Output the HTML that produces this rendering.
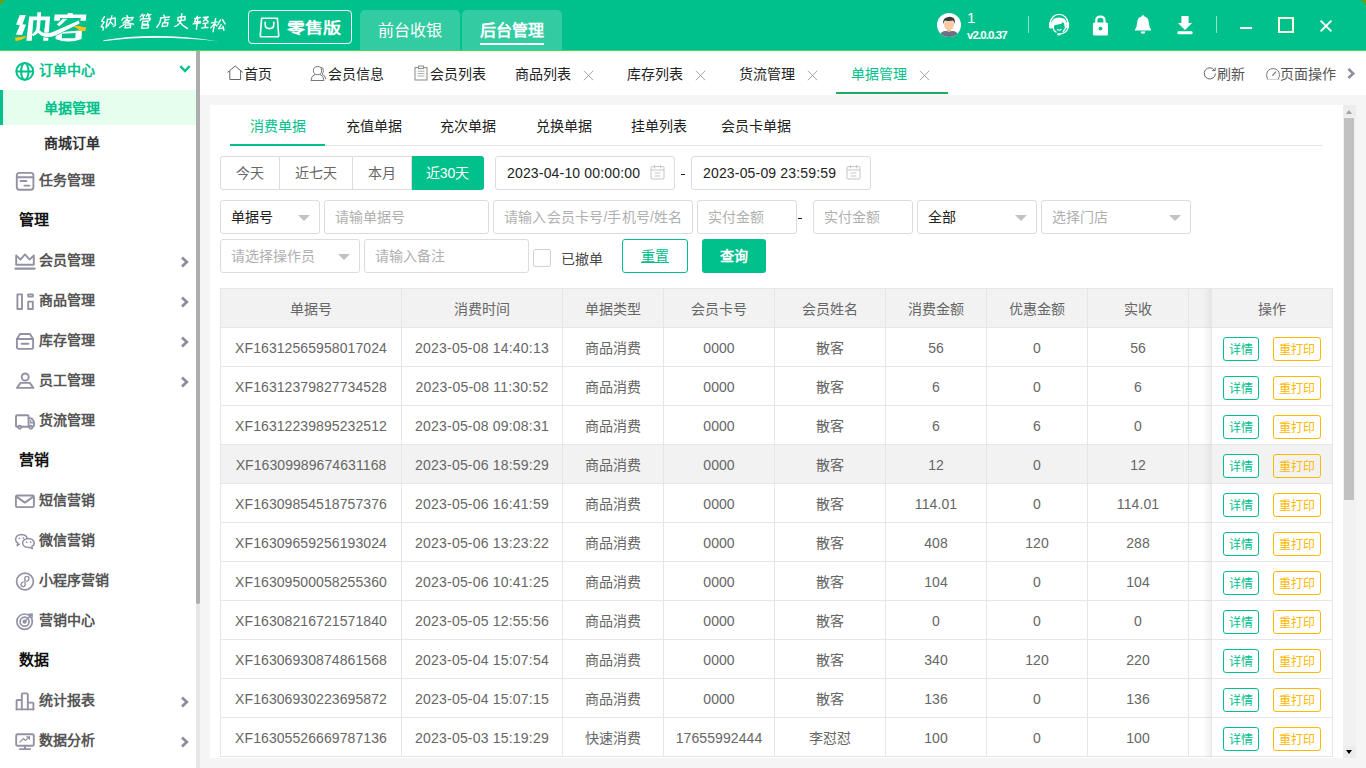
<!DOCTYPE html>
<html lang="zh-CN">
<head>
<meta charset="utf-8">
<title>纳客</title>
<style>
*{box-sizing:border-box;margin:0;padding:0}
html,body{width:1366px;height:768px;overflow:hidden}
body{position:relative;background:#f5f5f5;font-family:"Liberation Sans",sans-serif;font-size:14px;color:#666;line-height:1}
.abs{position:absolute}
svg{position:absolute;overflow:visible}
/* header */
#cn{position:absolute;left:0;top:0;width:1366px;height:6px;background:#7a9800}
#hd{position:absolute;left:0;top:0;width:1366px;height:51px;background:#00c08b;border-bottom:1px solid #46d468;border-radius:7px 7px 0 0}
.edition{position:absolute;left:248px;top:10px;width:104px;height:34px;border:1px solid #fff;border-radius:4px}
.edition span{position:absolute;left:38px;top:0;line-height:34px;font-size:15px;font-weight:bold;color:#fff;transform:scaleX(1.2);transform-origin:0 50%;white-space:nowrap}
.htab{position:absolute;top:10px;height:40px;width:100px;background:rgba(255,255,255,.2);border-radius:5px 5px 0 0;color:#fff;font-size:16px;line-height:42px;text-align:center}
.htab.on{font-weight:bold}
.htab.on i{position:absolute;left:18px;top:33px;width:64px;height:2px;background:#fff}
.uname{position:absolute;left:967px;top:9px;color:#fff;font-size:15px;line-height:17px}
.uver{position:absolute;left:967px;top:29px;color:#fff;font-size:11.5px;font-weight:bold;letter-spacing:-.9px;line-height:12px;white-space:nowrap}
.vdiv{position:absolute;top:16px;width:1px;height:17px;background:rgba(255,255,255,.55)}
/* sidebar */
#sb{position:absolute;left:0;top:51px;width:196px;height:717px;background:#fff}
#sbs{position:absolute;left:196px;top:51px;width:4px;height:717px;background:#e6e6e6}
#sbs i{position:absolute;left:0;top:0;width:4px;height:553px;background:#adadad;border-radius:0 0 2px 2px}
.mi{position:absolute;left:0;width:196px;height:40px;line-height:40px;font-weight:bold;color:#555;white-space:nowrap}
.mi span{position:absolute;left:39px;top:0}
.mi.sub span{left:44px}
.mi.sub{height:35px;line-height:37px;color:#333}
.mi.ttl span{left:19px;font-size:15px;color:#111}
.mi.g{color:#00c08b}
.mi.act{background:#e6feee;color:#00c08b;border-left:3px solid #00c08b}
.mi.act span{left:41px}
.mi svg{left:15px;top:11px;width:20px;height:20px;fill:none;stroke:#9292a4;stroke-width:1.9;stroke-linecap:round;stroke-linejoin:round}
.mi svg.chev{left:180px;top:15.5px;width:10px;height:12px;stroke:#8c8c9f;stroke-width:2.7;stroke-linecap:butt;stroke-linejoin:miter}
/* tab bar */
#tb{position:absolute;left:200px;top:51px;width:1166px;height:44px;background:#fff}
.pt{position:absolute;top:1px;height:44px;line-height:44px;color:#222;white-space:nowrap}
.pt.on{color:#00c08b}
.pt svg{fill:none;stroke:#777;stroke-width:1}
.px{position:absolute;top:19px;width:11px;height:11px}
.px svg{left:0;top:0;width:11px;height:11px;stroke:#aaa;stroke-width:1;fill:none}
/* panel */
#pn{position:absolute;left:210px;top:105px;width:1133px;height:653px;background:#fff}
.st{position:absolute;top:14px;height:26px;line-height:14px;padding-top:0;color:#222;white-space:nowrap}
.st.on{color:#00c08b}
.inp{position:absolute;height:34px;border:1px solid #dcdcdc;border-radius:3px;background:#fff;line-height:32px;white-space:nowrap;color:#222}
.inp span{position:absolute;left:10px;top:0}
.inp .ph{color:#b0b0b0}
.inp .tri{position:absolute;right:9px;top:14px;width:0;height:0;border:6px solid transparent;border-top-color:#c2c2c2;border-bottom-width:0}
.bg{position:absolute;top:51px;height:34px;border:1px solid #dcdcdc;border-left:none;line-height:32px;text-align:center;color:#666;background:#fff}
.btn{position:absolute;height:34px;line-height:32px;text-align:center;border-radius:3px}
/* table */
.th,.td{position:absolute;text-align:center;white-space:nowrap;overflow:hidden;border-right:1px solid #e6e6e6;border-bottom:1px solid #e6e6e6;color:#666}
.th{background:#f2f2f2;height:39px;line-height:40px}
.td{height:39px;line-height:40px;letter-spacing:.08px}
.tr{position:absolute;left:0;width:1133px;height:39px}
.tr.hov .td{background:#f2f2f2}
.ob{position:absolute;top:9px;height:24px;line-height:24px;font-size:12px;text-align:center;border-radius:3px;background:#fff}
.ob.d{left:11px;width:36px;border:1px solid #00c08b;color:#00c08b}
.ob.p{left:61px;width:48px;border:1px solid #ffb800;color:#ffb800;background:transparent}
</style>
</head>
<body>
<div id="cn"></div>
<div id="hd">
<svg style="left:10px;top:8px;width:90px;height:40px" viewBox="0 0 1366 607" fill="#fff">
<path d="M148,106L240,106L190,248L244,256L182,410L90,402L150,262L92,250Z"/>
<path d="M76,448Q165,444 236,425L238,448Q170,494 84,501Z" fill="#ffc20e"/>
<path d="M292,128H608L580,497H502L540,186H354L330,497H248Z"/>
<path d="M700,372L1092,338L1086,470Q890,548 690,470ZM790,392L786,458H990L996,378Z" fill-rule="evenodd"/>
<path d="M878,76H954L948,112H872Z"/>
<path d="M680,100H1158L1150,194H1068L1074,152H762L752,194H668Z"/>
<path d="M800,162H872L748,278L710,250Z"/>
<path d="M440,330Q520,412 640,368L1044,190L1056,236L700,414Q530,486 420,372Z" stroke="#00c08b" stroke-width="16" paint-order="stroke"/>
<path d="M416,64H472L456,300Q445,388 350,430L332,402Q392,362 402,300Z"/>
<path d="M965,276Q1040,256 1092,286Q1126,298 1158,288L1142,350Q1080,356 1036,322Q1000,292 968,294Z" fill="#ffc20e"/>
</svg>
<svg style="left:96px;top:8px;width:136px;height:40px" viewBox="0 0 1366 402" fill="none" stroke="#fff" stroke-width="14" stroke-linecap="round" stroke-linejoin="round">
<g transform="translate(19 0) skewX(-7)">
<path d="M75,88L55,132L80,142L55,186L80,196L78,222"/>
<path d="M110,112L106,200M110,116L186,100L195,176L178,186M150,78L140,142L120,182M146,142L170,166"/>
<path d="M300,76L310,90M256,122L266,102L366,96L354,120M310,110L272,150M292,126L340,126L242,196M300,146L378,162M300,172L296,200L350,196L350,170Z"/>
<path d="M456,62L436,90M450,76L480,70M466,80L470,100M510,56L496,86M506,70L540,66M520,78L526,96M440,126L446,110L540,106L534,126M466,132L466,204M466,136L520,130L520,160L470,162M470,172L530,168L528,200L468,204"/>
<path d="M670,72L680,86M640,100L730,90M646,100L640,150L616,194M690,106L688,140M690,122L726,116M670,150L668,186L720,180L722,148Z"/>
<path d="M816,96L820,130L890,120L886,86ZM850,56L850,130Q840,170 796,186M840,140Q870,180 924,206"/>
<path d="M986,106L1040,96M1010,82L986,140L1046,136M976,160L1050,150M1016,110L1016,214M1070,96L1120,90L1076,130M1086,106L1124,136M1076,156L1124,150M1100,156L1100,196M1066,200L1130,196"/>
<path d="M1160,150L1214,140M1196,106L1186,238M1190,156L1160,200M1196,160L1216,180M1246,120L1226,166M1266,116L1298,160M1260,166L1236,210L1286,200M1280,186L1294,224"/>
</g>
<path d="M72,324Q600,232 1236,336Q600,262 76,333Z" fill="#fff" stroke="none"/>
</svg>
<div class="edition"><svg style="left:10px;top:6px;width:21px;height:21px" viewBox="0 0 21 21" fill="none" stroke="#fff" stroke-width="1.6" stroke-linejoin="round" stroke-linecap="round"><path d="M2.6,1.2H18.4L19.7,18.6Q19.8,19.8 18.6,19.8H2.4Q1.2,19.8 1.3,18.6Z"/><path d="M6.2,5.2V7.5Q6.2,11.6 10.5,11.6Q14.8,11.6 14.8,7.5V5.2"/></svg><span>零售版</span></div>
<div class="htab" style="left:360px">前台收银</div>
<div class="htab on" style="left:462px">后台管理<i></i></div>
<svg style="left:937px;top:13px;width:24px;height:24px" viewBox="0 0 24 24"><defs><clipPath id="avc"><circle cx="12" cy="12" r="12"/></clipPath></defs><circle cx="12" cy="12" r="12" fill="#fff"/><g clip-path="url(#avc)"><path d="M2.5,24Q3,18.6 8,18L16,18Q21,18.6 21.5,24Z" fill="#6f6f86"/><path d="M10,15.5H14V18.2Q12,19.6 10,18.2Z" fill="#eeb58f"/><ellipse cx="12" cy="11.6" rx="5" ry="5.6" fill="#f8cba6"/><path d="M6.3,11.2Q5.2,5.2 10.5,4.2Q13,3.2 15.6,4.6Q18.6,5.6 17.7,11.2Q17.3,8.6 15.8,7.6Q12,8.6 8,7.4Q6.6,8.6 6.3,11.2Z" fill="#3b3b3b"/></g></svg>
<div class="uname">1</div><div class="uver">v2.0.0.37</div>
<div class="vdiv" style="left:1028px"></div><div class="vdiv" style="left:1216px"></div>
<svg style="left:1048px;top:13px;width:23px;height:24px" viewBox="0 0 23 24" fill="none" stroke="#fff" stroke-linecap="round"><path d="M2.3,10.6A8.8,9.2 0 0 1 19.9,10.6" stroke-width="1.4"/><rect x="1.1" y="9" width="2.9" height="6.4" rx="1.2" fill="#fff" stroke="none"/><rect x="18.2" y="9" width="2.9" height="6.4" rx="1.2" fill="#fff" stroke="none"/><path d="M3.8,9.4Q4.4,4.9 11,4.6Q17.8,4.9 18.4,9.4L18.3,13.9L16.5,13.7Q16.7,10.6 14.8,8.8Q14.4,10.2 13.2,10.8Q10,11.7 6.6,12.2Q5.6,13 5.9,15L4,15.3Z" fill="#fff" stroke="none"/><path d="M5,14.6Q5.4,17.7 8.1,19.1M17.6,14.2Q17.2,16.7 15.2,18.3" stroke-width="1.2"/><path d="M9.4,16.5Q11.2,17.7 13.1,16.5" stroke-width="1.1"/><path d="M19.8,15.2Q19.2,19.6 12.6,21" stroke-width="1.2"/><ellipse cx="10.9" cy="21.2" rx="1.7" ry="1.25" fill="#fff" stroke="none"/></svg>
<svg style="left:1092px;top:14px;width:17px;height:22px" viewBox="0 0 17 22"><path d="M4.3,9V6.4Q4.3,2.6 8.4,2.6Q12.5,2.6 12.5,6.4V9" fill="none" stroke="#fff" stroke-width="2.2"/><rect x="0.9" y="8.4" width="15.1" height="13.1" rx="1.6" fill="#fff"/><circle cx="8.4" cy="14.6" r="1.9" fill="#00c08b"/></svg>
<svg style="left:1134px;top:14px;width:18px;height:21px" viewBox="0 0 18 21" fill="#fff"><path d="M9,1.2Q10.3,1.2 10.4,2.6Q14.6,3.8 14.8,8.6Q15,13.2 17,15.4V16.6H1V15.4Q3,13.2 3.2,8.6Q3.4,3.8 7.6,2.6Q7.7,1.2 9,1.2Z"/><path d="M6.6,17.6H11.4Q11.2,19.8 9,19.8Q6.8,19.8 6.6,17.6Z"/></svg>
<svg style="left:1177px;top:15px;width:16px;height:20px" viewBox="0 0 16 20" fill="#fff"><path d="M4.4,1H11.6V8H15L8,15L1,8H4.4Z"/><rect x="0.5" y="16.2" width="15" height="3" rx="1"/></svg>
<div class="abs" style="left:1240px;top:27px;width:12px;height:2px;background:#fff"></div>
<div class="abs" style="left:1278px;top:17px;width:16px;height:16px;border:2px solid #ffffe0"></div>
<svg style="left:1320px;top:20px;width:12px;height:12px" viewBox="0 0 12 12" stroke="#fff" stroke-width="1.9"><path d="M.6,.6L11.4,11.4M11.4,.6L.6,11.4"/></svg>
</div>
<div id="sb">
<div class="mi g" style="top:0px;height:39px;line-height:39px"><svg viewBox="0 0 20 20" style="stroke:#00c08b;stroke-width:2"><circle cx="9.8" cy="9.4" r="8.4"/><ellipse cx="9.8" cy="9.4" rx="3.7" ry="8.4"/><path d="M1.6,9.4H18"/></svg><span>订单中心</span><svg class="chev" viewBox="0 0 12 10" style="left:179px;top:13px;width:12px;height:10px;stroke:#00c08b;stroke-width:2.4;stroke-linecap:butt;stroke-linejoin:miter"><path d="M1.4,2.2L6,7L10.6,2.2"/></svg></div>
<div class="mi sub act" style="top:39px"><span>单据管理</span></div>
<div class="mi sub" style="top:74px"><span>商城订单</span></div>
<div class="mi " style="top:109px"><svg viewBox="0 0 20 20"><rect x="1.8" y="1.9" width="16.6" height="16.8" rx="2.4"/><path d="M1.8,6.2H18.4M5.6,10H11.4M9.4,14.6H14.4" /></svg><span>任务管理</span></div>
<div class="mi ttl" style="top:149px"><span>管理</span></div>
<div class="mi " style="top:189px"><svg viewBox="0 0 20 20"><path d="M1.2,4.4L5.4,8.6L10,3.4L14.6,8.6L18.8,4.4V13.8H1.2Z"/><path d="M.4,17.6H19.6" stroke-width="2.1"/></svg><span>会员管理</span><svg class="chev" viewBox="0 0 10 12"><path d="M2,1.5L6.8,6L2,10.5"/></svg></div>
<div class="mi " style="top:229px"><svg viewBox="0 0 20 20"><rect x="2.4" y="3.4" width="4.6" height="14.6"/><rect x="13.2" y="3.4" width="4.6" height="2.2"/><rect x="13.2" y="10.6" width="4.6" height="7.4"/></svg><span>商品管理</span><svg class="chev" viewBox="0 0 10 12"><path d="M2,1.5L6.8,6L2,10.5"/></svg></div>
<div class="mi " style="top:269px"><svg viewBox="0 0 20 20"><path d="M1.9,8L5,3H15L18.1,8"/><path d="M1.9,8H18.1V16Q18.1,17.9 16.2,17.9H3.8Q1.9,17.9 1.9,16Z"/><path d="M6.6,12.7H13.4"/></svg><span>库存管理</span><svg class="chev" viewBox="0 0 10 12"><path d="M2,1.5L6.8,6L2,10.5"/></svg></div>
<div class="mi " style="top:309px"><svg viewBox="0 0 20 20"><circle cx="10.2" cy="6" r="3.5"/><path d="M2,16.9L5.6,11.9H14.8L18.4,16.9Z"/></svg><span>员工管理</span><svg class="chev" viewBox="0 0 10 12"><path d="M2,1.5L6.8,6L2,10.5"/></svg></div>
<div class="mi " style="top:349px"><svg viewBox="0 0 20 20"><path d="M3,15.8H2.2Q1,15.8 1,14.6V5.4Q1,4.2 2.2,4.2H12.4Q13.6,4.2 13.6,5.4V15.8H6.4"/><path d="M13.6,7.4H16.6L19,10.8V14.6Q19,15.8 17.8,15.8H17.6M13.6,15.8H14.2"/><circle cx="4.7" cy="16.2" r="1.5"/><circle cx="15.9" cy="16.2" r="1.5"/><path d="M15.6,9.6V11.8H18.2" stroke-width="1.4"/></svg><span>货流管理</span></div>
<div class="mi ttl" style="top:389px"><span>营销</span></div>
<div class="mi " style="top:429px"><svg viewBox="0 0 20 20"><rect x=".9" y="4.5" width="18" height="11.6" rx="1.4"/><path d="M1.4,5.6L9.9,11.6L18.4,5.6"/></svg><span>短信营销</span></div>
<div class="mi " style="top:469px"><svg viewBox="0 0 20 20" style="stroke-width:1.5"><path d="M4.4,13.2L2.2,14.6L2.8,12Q.4,10.6 .6,8.2Q1,3.6 6.6,3.4Q11.6,3.6 12.2,7.6"/><path d="M13.4,7.4Q8,7.6 7.6,12Q8,16.4 13.4,16.6L14.6,16.4L17.4,17.6L16.8,15.4Q19.4,14.2 19.2,12Q18.8,7.6 13.4,7.4Z" fill="#fff"/><circle cx="4.2" cy="7.4" r=".6" fill="#9292a4" stroke-width=".5"/><circle cx="8.2" cy="7" r=".6" fill="#9292a4" stroke-width=".5"/><circle cx="11.6" cy="11.2" r=".6" fill="#9292a4" stroke-width=".5"/><circle cx="15.6" cy="11.2" r=".6" fill="#9292a4" stroke-width=".5"/></svg><span>微信营销</span></div>
<div class="mi " style="top:509px"><svg viewBox="0 0 20 20" style="stroke-width:1.7"><circle cx="10" cy="10.5" r="8.4"/><path d="M10.2,13.6Q10.2,15.6 8.2,15.6Q6,15.6 6,13.5Q6,11.5 8.2,10.9M9.8,7.4Q9.8,5.4 11.8,5.4Q14,5.4 14,7.5Q14,9.5 11.8,10.1M10.2,13.6L9.8,7.4" stroke-width="1.4"/></svg><span>小程序营销</span></div>
<div class="mi " style="top:549px"><svg viewBox="0 0 20 20" style="stroke-width:1.7"><circle cx="9.6" cy="10.7" r="7.7"/><circle cx="9.6" cy="10.7" r="4.5"/><circle cx="9.6" cy="10.7" r="1.3" fill="#9292a4"/><path d="M10.4,9.8L17.2,3M14,3.2L17.2,3L17,6.2" stroke-width="1.5"/></svg><span>营销中心</span></div>
<div class="mi ttl" style="top:589px"><span>数据</span></div>
<div class="mi " style="top:629px"><svg viewBox="0 0 20 20"><path d="M1.6,18.4V9.8Q1.6,9 2.4,9H6.8V18.4M6.8,18.4V3.4Q6.8,2.4 7.8,2.4H11.8Q12.8,2.4 12.8,3.4V18.4M12.8,11.6H17.4Q18.4,11.6 18.4,12.6V18.4"/><path d="M1.6,18.4H18.4"/></svg><span>统计报表</span><svg class="chev" viewBox="0 0 10 12"><path d="M2,1.5L6.8,6L2,10.5"/></svg></div>
<div class="mi " style="top:669px"><svg viewBox="0 0 20 20"><rect x="1.2" y="3.2" width="17.6" height="11.6" rx="1.4"/><path d="M10,14.8V18.1M4.8,18.1H15.2" stroke-width="1.9"/><path d="M5,11L8.4,7.6L10.6,9.4L14.4,5.8M11.8,5.8H14.4V8.2" stroke-width="1.3"/></svg><span>数据分析</span><svg class="chev" viewBox="0 0 10 12"><path d="M2,1.5L6.8,6L2,10.5"/></svg></div>
</div>
<div id="sbs"><i></i></div>
<div id="tb">
<svg style="left:27px;top:14px;width:17px;height:16px" viewBox="0 0 17 16" fill="none" stroke="#666" stroke-width="1" stroke-linejoin="round"><path d="M.6,7.4L8.2,1L15.8,7.4"/><path d="M2.8,6V14.5H13.6V6"/></svg><div class="pt" style="left:44px">首页</div>
<svg style="left:110px;top:14px;width:17px;height:17px" viewBox="0 0 17 17" fill="none" stroke="#777" stroke-width="1"><path d="M10.6,2.2Q13.4,2.4 13.4,5.6Q13.4,8 12,9Q15.4,10.2 15.8,14.2"/><circle cx="7.5" cy="5.6" r="4.1" fill="#fff"/><path d="M1,15.5Q1.2,10.6 5.2,9.4M9.8,9.4Q13.8,10.6 14,15.5H1"/></svg><div class="pt" style="left:127.5px">会员信息</div>
<svg style="left:214px;top:14px;width:14px;height:16px" viewBox="0 0 14 16" fill="none" stroke="#888" stroke-width="1"><rect x="1" y="2.6" width="12" height="12.4"/><rect x="4.6" y="1" width="4.8" height="2.6" fill="#fff"/><path d="M3.6,6.2H10.4M3.6,8.6H10.4M3.6,11H10.4" stroke="#aaa"/></svg><div class="pt" style="left:229.5px">会员列表</div>
<div class="pt" style="left:315px">商品列表</div><div class="px" style="left:383px"><svg viewBox="0 0 11 11"><path d="M.8,.8L10.2,10.2M10.2,.8L.8,10.2"/></svg></div>
<div class="pt" style="left:427px">库存列表</div><div class="px" style="left:495px"><svg viewBox="0 0 11 11"><path d="M.8,.8L10.2,10.2M10.2,.8L.8,10.2"/></svg></div>
<div class="pt" style="left:539px">货流管理</div><div class="px" style="left:607px"><svg viewBox="0 0 11 11"><path d="M.8,.8L10.2,10.2M10.2,.8L.8,10.2"/></svg></div>
<div class="pt on" style="left:651px">单据管理</div><div class="px" style="left:719px"><svg viewBox="0 0 11 11"><path d="M.8,.8L10.2,10.2M10.2,.8L.8,10.2"/></svg></div>
<div class="abs" style="left:636px;top:41px;width:112px;height:2px;background:#1bab5c"></div>
<svg style="left:1003px;top:16px;width:14px;height:14px" viewBox="0 0 14 14" fill="none" stroke="#666" stroke-width="1"><path d="M11.4,3.2A5.6,5.6 0 1 0 12.4,6.6"/><path d="M9.2,3.6H12.2V.6" stroke-linejoin="miter"/></svg><div class="pt" style="left:1017px;color:#555">刷新</div>
<svg style="left:1066px;top:17px;width:14px;height:12px" viewBox="0 0 14 12" fill="none" stroke="#777" stroke-width="1"><path d="M1.6,11Q.4,8.6 .6,6.6Q1.2,.8 7,.6Q12.8,.8 13.4,6.6Q13.6,8.6 12.4,11"/><path d="M6.4,7.6L10,3.6" stroke-width="1.2"/><path d="M.6,11.4H13.4" stroke="#ccc"/></svg><div class="pt" style="left:1080px;color:#555">页面操作</div>
<svg style="left:1147px;top:17px;width:8px;height:11px" viewBox="0 0 8 11" fill="none" stroke="#8c8c9f" stroke-width="2.5"><path d="M1.4,1L6.2,5.5L1.4,10"/></svg>
</div>
<div id="pn">
<div class="st on" style="left:40px">消费单据</div><div class="st" style="left:135.5px">充值单据</div><div class="st" style="left:230px">充次单据</div><div class="st" style="left:325.5px">兑换单据</div><div class="st" style="left:420.5px">挂单列表</div><div class="st" style="left:510.5px">会员卡单据</div>
<div class="abs" style="left:20px;top:40px;width:1093px;height:1px;background:#e6e6e6"></div><div class="abs" style="left:20px;top:39px;width:95px;height:2px;background:#00c08b"></div>
<div class="bg" style="left:10px;width:60px;border-left:1px solid #dcdcdc;border-radius:3px 0 0 3px">今天</div><div class="bg" style="left:70px;width:73px">近七天</div><div class="bg" style="left:143px;width:59px">本月</div><div class="bg" style="left:202px;width:72px;background:#00c08b;border-color:#00c08b;color:#fff;border-radius:0 3px 3px 0">近30天</div>
<div class="inp" style="left:285px;top:51px;width:180px"><span style="left:11px;letter-spacing:.17px">2023-04-10 00:00:00</span><svg style="left:154px;top:7px;width:15px;height:16px" viewBox="0 0 15 16" fill="none" stroke="#c6c6c6" stroke-width="1"><rect x="1" y="2.6" width="13" height="12.4" rx="1"/><path d="M1,6H14M4.4,1V4.4M10.6,1V4.4M4.6,9H10.4M4.6,12H10.4"/></svg></div><div class="abs" style="left:471px;top:69px;width:4px;height:1px;background:#222"></div><div class="inp" style="left:481px;top:51px;width:180px"><span style="left:11px;letter-spacing:.17px">2023-05-09 23:59:59</span><svg style="left:154px;top:7px;width:15px;height:16px" viewBox="0 0 15 16" fill="none" stroke="#c6c6c6" stroke-width="1"><rect x="1" y="2.6" width="13" height="12.4" rx="1"/><path d="M1,6H14M4.4,1V4.4M10.6,1V4.4M4.6,9H10.4M4.6,12H10.4"/></svg></div>
<div class="inp" style="left:10px;top:95px;width:100px"><span>单据号</span><i class="tri"></i></div><div class="inp" style="left:114px;top:95px;width:165px"><span class="ph">请输单据号</span></div><div class="inp" style="left:283px;top:95px;width:200px"><span class="ph" style="letter-spacing:.2px">请输入会员卡号/手机号/姓名</span></div><div class="inp" style="left:487px;top:95px;width:100px"><span class="ph">实付金额</span></div><div class="abs" style="left:588px;top:113px;width:4px;height:1px;background:#222"></div><div class="inp" style="left:603px;top:95px;width:100px"><span class="ph">实付金额</span></div><div class="inp" style="left:707px;top:95px;width:120px"><span>全部</span><i class="tri"></i></div><div class="inp" style="left:831px;top:95px;width:150px"><span class="ph">选择门店</span><i class="tri"></i></div>
<div class="inp" style="left:10px;top:134px;width:140px"><span class="ph">请选择操作员</span><i class="tri"></i></div><div class="inp" style="left:154px;top:134px;width:165px"><span class="ph">请输入备注</span></div><div class="abs" style="left:323px;top:144px;width:18px;height:18px;border:1px solid #d2d2d2;border-radius:2px;background:#fff"></div><div class="abs" style="left:351px;top:135px;line-height:38px;color:#484848;white-space:nowrap">已撤单</div><div class="btn" style="left:412px;top:134px;width:66px;border:1px solid #00c08b;color:#00c08b;background:#fff;text-decoration:underline">重置</div><div class="btn" style="left:492px;top:134px;width:64px;background:#00c08b;color:#fff;line-height:34px;font-weight:bold">查询</div>
<div class="abs" style="left:10px;top:183px;width:1113px;height:1px;background:#e6e6e6"></div><div class="abs" style="left:10px;top:183px;width:1px;height:469px;background:#e6e6e6"></div>
<div class="tr" style="top:184px"><div class="th" style="left:11px;width:181px">单据号</div><div class="th" style="left:192px;width:161px">消费时间</div><div class="th" style="left:353px;width:101px">单据类型</div><div class="th" style="left:454px;width:111px">会员卡号</div><div class="th" style="left:565px;width:111px">会员姓名</div><div class="th" style="left:676px;width:101px">消费金额</div><div class="th" style="left:777px;width:101px">优惠金额</div><div class="th" style="left:878px;width:101px">实收</div><div class="th" style="left:979px;width:40px"></div></div>
<div class="tr" style="top:223px"><div class="td" style="left:11px;width:181px">XF16312565958017024</div><div class="td" style="left:192px;width:161px;letter-spacing:.2px">2023-05-08 14:40:13</div><div class="td" style="left:353px;width:101px">商品消费</div><div class="td" style="left:454px;width:111px">0000</div><div class="td" style="left:565px;width:111px">散客</div><div class="td" style="left:676px;width:101px">56</div><div class="td" style="left:777px;width:101px">0</div><div class="td" style="left:878px;width:101px">56</div><div class="td" style="left:979px;width:40px"></div></div>
<div class="tr" style="top:262px"><div class="td" style="left:11px;width:181px">XF16312379827734528</div><div class="td" style="left:192px;width:161px;letter-spacing:.2px">2023-05-08 11:30:52</div><div class="td" style="left:353px;width:101px">商品消费</div><div class="td" style="left:454px;width:111px">0000</div><div class="td" style="left:565px;width:111px">散客</div><div class="td" style="left:676px;width:101px">6</div><div class="td" style="left:777px;width:101px">0</div><div class="td" style="left:878px;width:101px">6</div><div class="td" style="left:979px;width:40px"></div></div>
<div class="tr" style="top:301px"><div class="td" style="left:11px;width:181px">XF16312239895232512</div><div class="td" style="left:192px;width:161px;letter-spacing:.2px">2023-05-08 09:08:31</div><div class="td" style="left:353px;width:101px">商品消费</div><div class="td" style="left:454px;width:111px">0000</div><div class="td" style="left:565px;width:111px">散客</div><div class="td" style="left:676px;width:101px">6</div><div class="td" style="left:777px;width:101px">6</div><div class="td" style="left:878px;width:101px">0</div><div class="td" style="left:979px;width:40px"></div></div>
<div class="tr hov" style="top:340px"><div class="td" style="left:11px;width:181px">XF16309989674631168</div><div class="td" style="left:192px;width:161px;letter-spacing:.2px">2023-05-06 18:59:29</div><div class="td" style="left:353px;width:101px">商品消费</div><div class="td" style="left:454px;width:111px">0000</div><div class="td" style="left:565px;width:111px">散客</div><div class="td" style="left:676px;width:101px">12</div><div class="td" style="left:777px;width:101px">0</div><div class="td" style="left:878px;width:101px">12</div><div class="td" style="left:979px;width:40px"></div></div>
<div class="tr" style="top:379px"><div class="td" style="left:11px;width:181px">XF16309854518757376</div><div class="td" style="left:192px;width:161px;letter-spacing:.2px">2023-05-06 16:41:59</div><div class="td" style="left:353px;width:101px">商品消费</div><div class="td" style="left:454px;width:111px">0000</div><div class="td" style="left:565px;width:111px">散客</div><div class="td" style="left:676px;width:101px">114.01</div><div class="td" style="left:777px;width:101px">0</div><div class="td" style="left:878px;width:101px">114.01</div><div class="td" style="left:979px;width:40px"></div></div>
<div class="tr" style="top:418px"><div class="td" style="left:11px;width:181px">XF16309659256193024</div><div class="td" style="left:192px;width:161px;letter-spacing:.2px">2023-05-06 13:23:22</div><div class="td" style="left:353px;width:101px">商品消费</div><div class="td" style="left:454px;width:111px">0000</div><div class="td" style="left:565px;width:111px">散客</div><div class="td" style="left:676px;width:101px">408</div><div class="td" style="left:777px;width:101px">120</div><div class="td" style="left:878px;width:101px">288</div><div class="td" style="left:979px;width:40px"></div></div>
<div class="tr" style="top:457px"><div class="td" style="left:11px;width:181px">XF16309500058255360</div><div class="td" style="left:192px;width:161px;letter-spacing:.2px">2023-05-06 10:41:25</div><div class="td" style="left:353px;width:101px">商品消费</div><div class="td" style="left:454px;width:111px">0000</div><div class="td" style="left:565px;width:111px">散客</div><div class="td" style="left:676px;width:101px">104</div><div class="td" style="left:777px;width:101px">0</div><div class="td" style="left:878px;width:101px">104</div><div class="td" style="left:979px;width:40px"></div></div>
<div class="tr" style="top:496px"><div class="td" style="left:11px;width:181px">XF16308216721571840</div><div class="td" style="left:192px;width:161px;letter-spacing:.2px">2023-05-05 12:55:56</div><div class="td" style="left:353px;width:101px">商品消费</div><div class="td" style="left:454px;width:111px">0000</div><div class="td" style="left:565px;width:111px">散客</div><div class="td" style="left:676px;width:101px">0</div><div class="td" style="left:777px;width:101px">0</div><div class="td" style="left:878px;width:101px">0</div><div class="td" style="left:979px;width:40px"></div></div>
<div class="tr" style="top:535px"><div class="td" style="left:11px;width:181px">XF16306930874861568</div><div class="td" style="left:192px;width:161px;letter-spacing:.2px">2023-05-04 15:07:54</div><div class="td" style="left:353px;width:101px">商品消费</div><div class="td" style="left:454px;width:111px">0000</div><div class="td" style="left:565px;width:111px">散客</div><div class="td" style="left:676px;width:101px">340</div><div class="td" style="left:777px;width:101px">120</div><div class="td" style="left:878px;width:101px">220</div><div class="td" style="left:979px;width:40px"></div></div>
<div class="tr" style="top:574px"><div class="td" style="left:11px;width:181px">XF16306930223695872</div><div class="td" style="left:192px;width:161px;letter-spacing:.2px">2023-05-04 15:07:15</div><div class="td" style="left:353px;width:101px">商品消费</div><div class="td" style="left:454px;width:111px">0000</div><div class="td" style="left:565px;width:111px">散客</div><div class="td" style="left:676px;width:101px">136</div><div class="td" style="left:777px;width:101px">0</div><div class="td" style="left:878px;width:101px">136</div><div class="td" style="left:979px;width:40px"></div></div>
<div class="tr" style="top:613px"><div class="td" style="left:11px;width:181px">XF16305526669787136</div><div class="td" style="left:192px;width:161px;letter-spacing:.2px">2023-05-03 15:19:29</div><div class="td" style="left:353px;width:101px">快速消费</div><div class="td" style="left:454px;width:111px">17655992444</div><div class="td" style="left:565px;width:111px">李怼怼</div><div class="td" style="left:676px;width:101px">100</div><div class="td" style="left:777px;width:101px">0</div><div class="td" style="left:878px;width:101px">100</div><div class="td" style="left:979px;width:40px"></div></div>
<div class="abs" style="left:1001px;top:183px;width:122px;height:469px;background:#fff;border-left:1px solid #e6e6e6;border-top:1px solid #e6e6e6"><div class="abs" style="left:-9px;top:0;width:8px;height:468px;background:linear-gradient(to right,rgba(0,0,0,0),rgba(0,0,0,.055))"></div><div class="th" style="left:0;top:0;width:121px">操作</div><div class="td" style="left:0;top:39px;width:121px"><div class="ob d">详情</div><div class="ob p">重打印</div></div><div class="td" style="left:0;top:78px;width:121px"><div class="ob d">详情</div><div class="ob p">重打印</div></div><div class="td" style="left:0;top:117px;width:121px"><div class="ob d">详情</div><div class="ob p">重打印</div></div><div class="td" style="left:0;top:156px;width:121px;background:#f2f2f2"><div class="ob d">详情</div><div class="ob p">重打印</div></div><div class="td" style="left:0;top:195px;width:121px"><div class="ob d">详情</div><div class="ob p">重打印</div></div><div class="td" style="left:0;top:234px;width:121px"><div class="ob d">详情</div><div class="ob p">重打印</div></div><div class="td" style="left:0;top:273px;width:121px"><div class="ob d">详情</div><div class="ob p">重打印</div></div><div class="td" style="left:0;top:312px;width:121px"><div class="ob d">详情</div><div class="ob p">重打印</div></div><div class="td" style="left:0;top:351px;width:121px"><div class="ob d">详情</div><div class="ob p">重打印</div></div><div class="td" style="left:0;top:390px;width:121px"><div class="ob d">详情</div><div class="ob p">重打印</div></div><div class="td" style="left:0;top:429px;width:121px"><div class="ob d">详情</div><div class="ob p">重打印</div></div></div>
</div>
<div class="abs" style="left:1343px;top:105px;width:13px;height:653px;background:#f1f1f1"><div class="abs" style="left:0;top:0;width:13px;height:12px;background:#ececec"></div><div class="abs" style="left:3px;top:5px;width:0;height:0;border:3.5px solid transparent;border-bottom:4px solid #a3a3a3;border-top-width:0"></div><div class="abs" style="left:1px;top:13px;width:10px;height:382px;background:#c1c1c1"></div><div class="abs" style="left:0;top:641px;width:13px;height:12px;background:#ececec"></div><div class="abs" style="left:3px;top:645px;width:0;height:0;border:3.5px solid transparent;border-top:4px solid #000;border-bottom-width:0"></div></div>
</body>
</html>
